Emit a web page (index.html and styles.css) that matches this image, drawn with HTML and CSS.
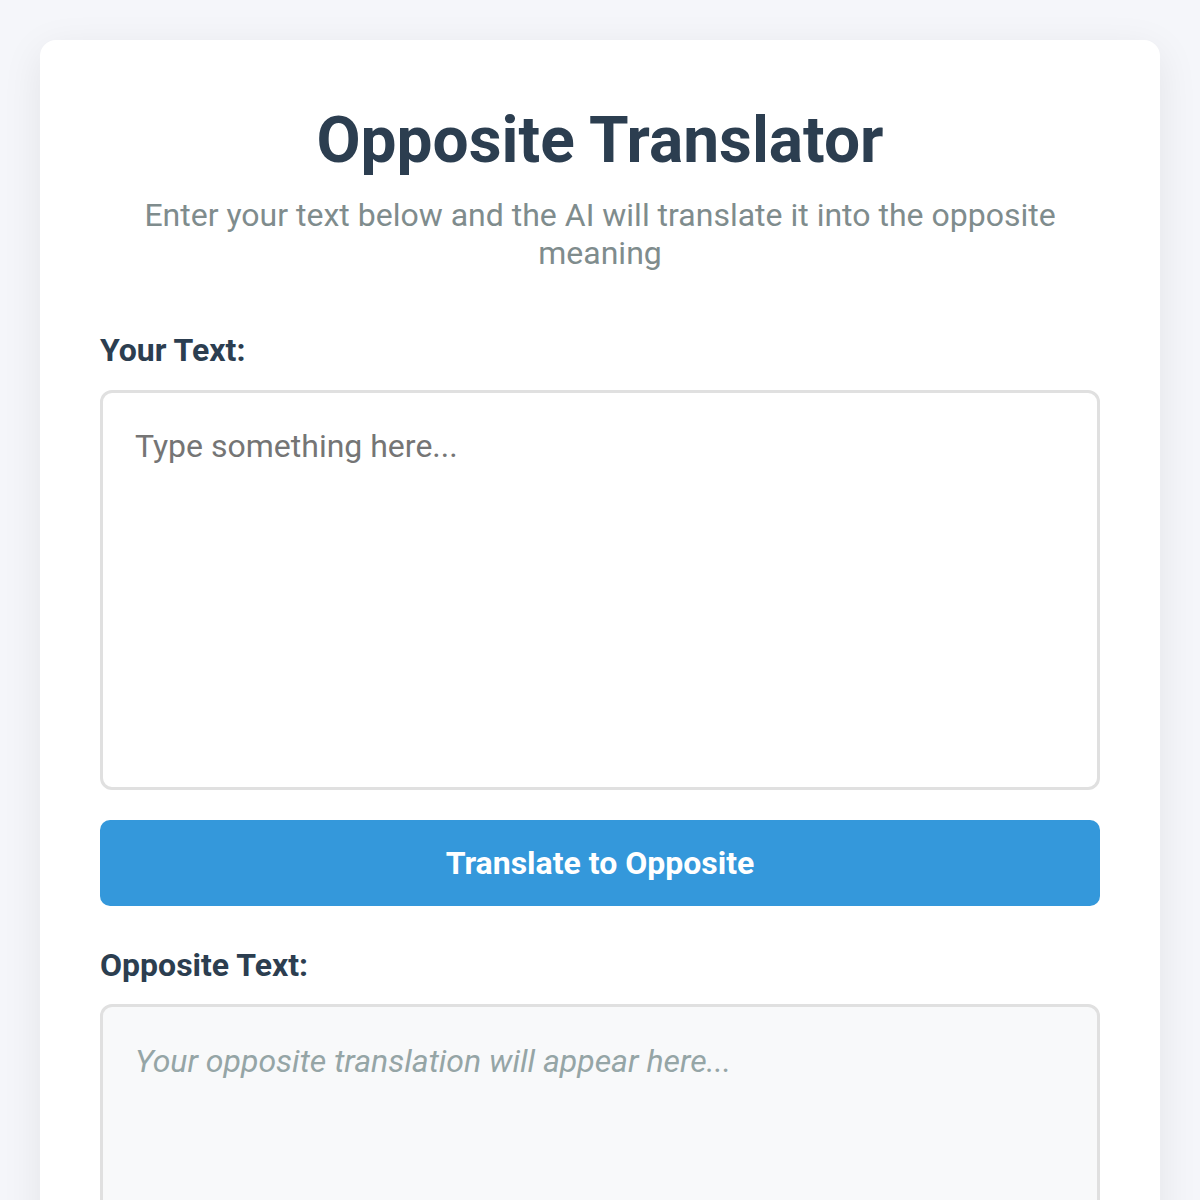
FILE: index.html
```html
<!DOCTYPE html>
<html lang="en">
  <head>
    <meta charset="UTF-8" />
    <meta name="viewport" content="width=device-width, initial-scale=1.0" />
    <title>Opposite Translator</title>
    <link rel="stylesheet" href="styles.css">
  </head>
  <body>
    <div class="container">
      <h1>Opposite Translator</h1>
      <p class="subtitle">Enter your text below and the AI will translate it into the opposite meaning</p>

      <label for="inputText">Your Text:</label>
      <textarea id="inputText" placeholder="Type something here..."></textarea>

      <button class="translateBtn">Translate to Opposite</button>

      <label>Opposite Text:</label>
      <div class="output">
        <span class="placeholder">Your opposite translation will appear here...</span>
      </div>
    </div>
  </body>
</html>
```

FILE: styles.css
```css
body {
  margin: 0;
  padding: 40px;
  background-color: #f5f6fa;
  font-family: Roboto, "Liberation Sans", sans-serif;
  color: #2c3e50;
}

.container {
  background-color: #fff;
  border-radius: 16px;
  padding: 60px;
  box-shadow: 0 10px 40px rgba(0, 0, 0, 0.08);
}

h1 {
  margin: 3px 0 17px;
  text-align: center;
  font-size: 64px;
  font-weight: 700;
  line-height: 1.2;
  color: #2c3e50;
}

.subtitle {
  margin: 0 0 59px;
  text-align: center;
  font-size: 32px;
  line-height: 1.18;
  color: #7f8c8d;
}

label {
  display: block;
  margin-bottom: 20px;
  font-size: 32px;
  font-weight: 700;
  line-height: 1.2;
  color: #2c3e50;
}

textarea {
  display: block;
  box-sizing: border-box;
  width: 100%;
  height: 400px;
  padding: 32px;
  border: 3px solid #e0e0e0;
  border-radius: 12px;
  font-family: inherit;
  font-size: 32px;
  line-height: 1.35;
  resize: none;
  outline: none;
}

textarea::placeholder {
  color: #757575;
}

.translateBtn {
  display: block;
  width: 100%;
  height: 86px;
  margin: 30px 0 40px;
  border: none;
  border-radius: 10px;
  background-color: #3498db;
  color: #fff;
  font-family: inherit;
  font-size: 32px;
  font-weight: 700;
}

.output {
  box-sizing: border-box;
  min-height: 400px;
  padding: 32px;
  border: 3px solid #e0e0e0;
  border-radius: 12px;
  background-color: #f8f9fa;
  font-size: 32px;
  line-height: 1.4;
}

.placeholder {
  color: #95a5a6;
  font-style: italic;
}
```
